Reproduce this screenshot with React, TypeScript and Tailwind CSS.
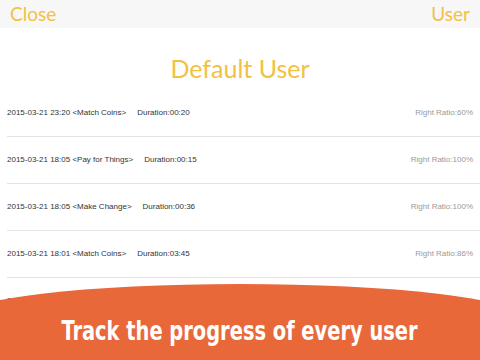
import React from 'react';

const rows = [
  { date: '2015-03-21 23:20', game: 'Match Coins', dur: '00:20', ratio: '60%' },
  { date: '2015-03-21 18:05', game: 'Pay for Things', dur: '00:15', ratio: '100%' },
  { date: '2015-03-21 18:05', game: 'Make Change', dur: '00:36', ratio: '100%' },
  { date: '2015-03-21 18:01', game: 'Match Coins', dur: '03:45', ratio: '86%' },
  { date: '2015-03-21 17:40', game: 'Match Coins', dur: '01:12', ratio: '100%' },
];

export default function App() {
  return (
    <div className="relative w-[480px] h-[360px] overflow-hidden bg-white">
      {/* Barra superior */}
      <div className="h-[28px] bg-[#f7f7f7] flex items-center justify-between px-[10px] text-[#f2c144] text-[19px] font-['Lato',sans-serif]">
        <span>Close</span>
        <span>User</span>
      </div>

      <div className="h-[62px] flex items-end justify-center pb-[3px] text-[#f2c144] text-[25px] font-['Lato',sans-serif]">
        Default User
      </div>

      {/* Lista */}
      <div className="pl-[7px] font-['Liberation_Sans',sans-serif] text-[8px]">
        {rows.map((r, i) => (
          <div key={i} className="h-[47px] border-b border-[#e3e3e3] flex items-center justify-between pr-[7px]">
            <span className="text-[#333]">
              {r.date} &lt;{r.game}&gt;<span className="ml-[11px]">Duration:{r.dur}</span>
            </span>
            <span className="text-[#9a9a9a]">Right Ratio:{r.ratio}</span>
          </div>
        ))}
      </div>

      {/* Banner naranja */}
      <div className="absolute left-[-40px] right-[-40px] top-[284px] bottom-0 bg-[#e9683a] rounded-t-[50%_33px]" />
      <div className="absolute left-0 right-0 top-[302px] bottom-0 flex items-center justify-center text-white font-bold text-[27px] font-['DejaVu_Sans_Condensed',sans-serif]">
        <span className="inline-block scale-x-[0.8] whitespace-nowrap">Track the progress of every user</span>
      </div>
    </div>
  );
}
